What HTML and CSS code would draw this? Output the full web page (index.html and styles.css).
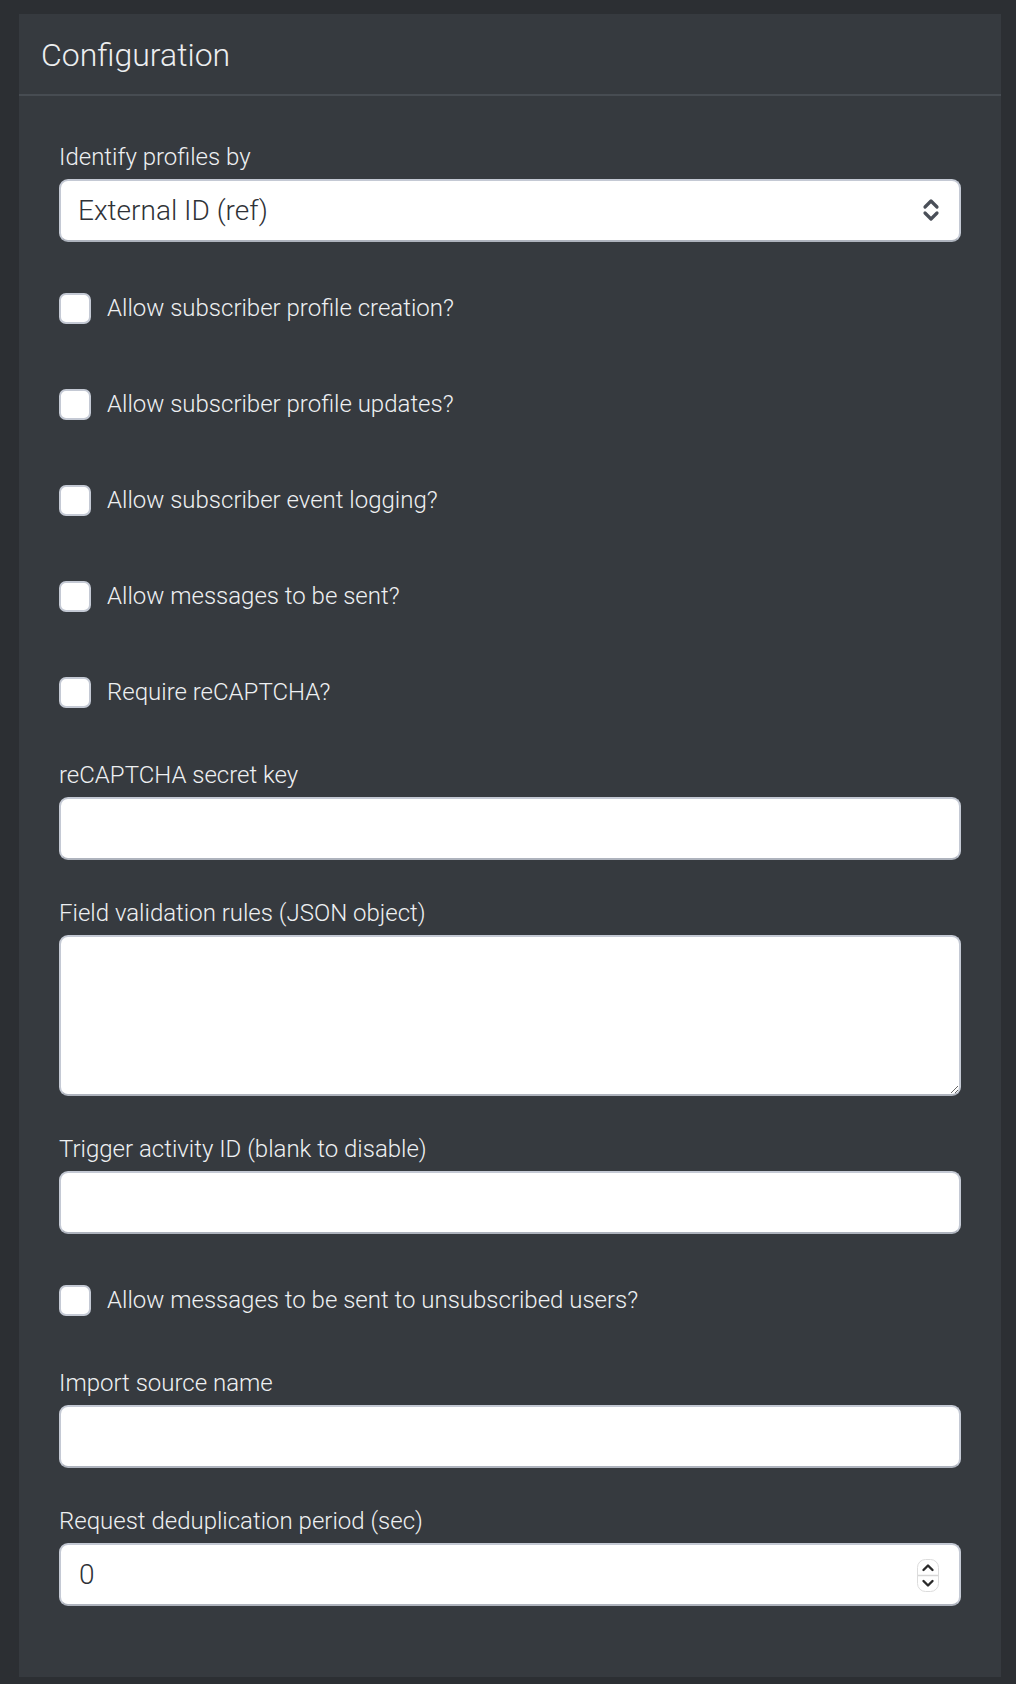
FILE: index.html
```html
<html>
<head>
	<title>Configuration</title>
	<link rel="stylesheet" href="styles.css">
</head>
<body>
	<div class="card">
		<div class="card-header">
			<h3 class="card-title">Configuration</h3>
		</div>
		<div class="card-body">
			<div class="form-group">
				<label class="field-label" for="identify">Identify profiles by</label>
				<div class="select-wrap">
					<select id="identify" class="field-input field-select">
						<option>External ID (ref)</option>
					</select>
					<svg class="select-arrows" width="18" height="26" viewBox="0 0 18 26">
						<path d="M3 10 L9 4 L15 10" fill="none" stroke="#4a4f58" stroke-width="3.2" stroke-linecap="round" stroke-linejoin="round"/>
						<path d="M3 16 L9 22 L15 16" fill="none" stroke="#4a4f58" stroke-width="3.2" stroke-linecap="round" stroke-linejoin="round"/>
					</svg>
				</div>
			</div>

			<label class="check-row"><input type="checkbox" class="check-box"> Allow subscriber profile creation?</label>
			<label class="check-row"><input type="checkbox" class="check-box"> Allow subscriber profile updates?</label>
			<label class="check-row"><input type="checkbox" class="check-box"> Allow subscriber event logging?</label>
			<label class="check-row"><input type="checkbox" class="check-box"> Allow messages to be sent?</label>
			<label class="check-row"><input type="checkbox" class="check-box"> Require reCAPTCHA?</label>

			<div class="form-group">
				<label class="field-label" for="secret">reCAPTCHA secret key</label>
				<input id="secret" type="text" class="field-input">
			</div>

			<div class="form-group">
				<label class="field-label" for="rules">Field validation rules (JSON object)</label>
				<textarea id="rules" class="field-input field-area"></textarea>
			</div>

			<div class="form-group">
				<label class="field-label" for="trigger">Trigger activity ID (blank to disable)</label>
				<input id="trigger" type="text" class="field-input">
			</div>

			<label class="check-row"><input type="checkbox" class="check-box"> Allow messages to be sent to unsubscribed users?</label>

			<div class="form-group">
				<label class="field-label" for="source">Import source name</label>
				<input id="source" type="text" class="field-input">
			</div>

			<div class="form-group last">
				<label class="field-label" for="dedup">Request deduplication period (sec)</label>
				<div class="number-wrap">
					<input id="dedup" type="text" class="field-input" value="0">
					<span class="spinner">
						<svg width="22" height="33" viewBox="0 0 22 33">
							<rect x="0.5" y="0.5" width="21" height="32" rx="8" fill="#fff" stroke="#dcdcdc"/>
							<line x1="1" y1="16.5" x2="21" y2="16.5" stroke="#d6d6d6" stroke-width="1.5"/>
							<path d="M6.5 11 L11 6.5 L15.5 11" fill="none" stroke="#2a2a2a" stroke-width="2.4" stroke-linecap="round" stroke-linejoin="round"/>
							<path d="M6.5 22 L11 26.5 L15.5 22" fill="none" stroke="#2a2a2a" stroke-width="2.4" stroke-linecap="round" stroke-linejoin="round"/>
						</svg>
					</span>
				</div>
			</div>
		</div>
	</div>
</body>
</html>
```

FILE: styles.css
```css
html, body {
	margin: 0;
	padding: 0;
	background: #2c2f33;
	font-family: Roboto, "Liberation Sans", sans-serif;
}

body {
	padding: 14px 15px 7px 19px;
}

.card {
	background: #363a3f;
	min-height: 1663px;
	box-sizing: border-box;
}

.card-header {
	padding: 22px 22px 20px 22px;
	border-bottom: 2px solid #474c52;
}

.card-title {
	margin: 0;
	font-size: 32px;
	font-weight: 300;
	line-height: 38px;
	color: #eceef0;
}

.card-body {
	padding: 43px 40px 37px 40px;
}

.form-group {
	margin-bottom: 35px;
}

.form-group.last {
	margin-bottom: 0;
}

.field-label {
	display: block;
	font-size: 24px;
	font-weight: 300;
	line-height: 36px;
	color: #eef0f2;
	margin-bottom: 4px;
}

.field-input {
	display: block;
	width: 100%;
	height: 63px;
	box-sizing: border-box;
	margin: 0;
	padding: 0 18px;
	border: 2px solid #c4c9d4;
	border-bottom-color: #aeb3bd;
	border-radius: 9px;
	background: #fff;
	font-family: Roboto, "Liberation Sans", sans-serif;
	font-size: 28px;
	font-weight: 300;
	color: #2f3237;
	outline: none;
}

.select-wrap,
.number-wrap {
	position: relative;
}

.field-select {
	-webkit-appearance: none;
	appearance: none;
	padding-left: 17px;
}

.select-arrows {
	position: absolute;
	right: 21px;
	top: 18px;
}

.field-area {
	height: 161px;
	resize: vertical;
	padding: 12px 18px;
}

.spinner {
	position: absolute;
	right: 22px;
	top: 16px;
	line-height: 0;
}

.check-row {
	display: flex;
	align-items: center;
	gap: 16px;
	min-height: 62px;
	margin-bottom: 34px;
	font-size: 24px;
	font-weight: 300;
	color: #eef0f2;
}

.check-box {
	-webkit-appearance: none;
	appearance: none;
	flex: none;
	width: 32px;
	height: 31px;
	margin: 0;
	background: #fff;
	border: 2px solid #c4c9d4;
	border-radius: 7px;
}
```
